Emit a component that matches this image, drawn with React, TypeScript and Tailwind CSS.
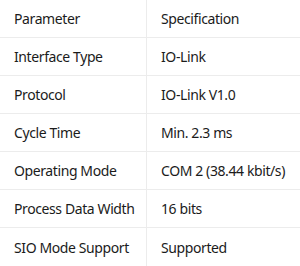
import React from "react";

const rows: [string, string][] = [
  ["Parameter", "Specification"],
  ["Interface Type", "IO-Link"],
  ["Protocol", "IO-Link V1.0"],
  ["Cycle Time", "Min. 2.3 ms"],
  ["Operating Mode", "COM 2 (38.44 kbit/s)"],
  ["Process Data Width", "16 bits"],
  ["SIO Mode Support", "Supported"],
];

export default function App() {
  return (
    <div className="w-[300px] h-[266px] bg-white text-[#1b1b1b] text-[14px] font-['Noto_Sans',sans-serif] tracking-[-0.4px]">
      {rows.map(([a, b], i) => (
        <div
          key={i}
          className={i < rows.length - 1 ? "flex h-[38px] border-b border-[#ececec]" : "flex h-[38px]"}
        >
          <div className="w-[147px] shrink-0 border-r border-[#ececec] flex items-center pl-[14px]">
            {a}
          </div>
          <div className="flex-1 flex items-center pl-[14px]">{b}</div>
        </div>
      ))}
    </div>
  );
}
